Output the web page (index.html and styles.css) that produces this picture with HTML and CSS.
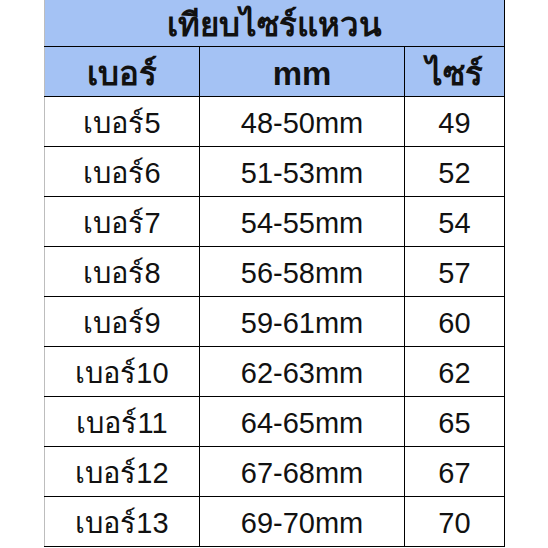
FILE: index.html
```html
<!DOCTYPE html>
<html lang="th">
<head>
<meta charset="utf-8">
<title>เทียบไซร์แหวน</title>
<link rel="stylesheet" href="styles.css">
</head>
<body>
<table class="sizes">
  <colgroup>
    <col class="c1"><col class="c2"><col class="c3">
  </colgroup>
  <thead>
    <tr class="title"><th colspan="3">เทียบไซร์แหวน</th></tr>
    <tr class="head"><th>เบอร์</th><th>mm</th><th>ไซร์</th></tr>
  </thead>
  <tbody>
    <tr><td>เบอร์5</td><td>48-50mm</td><td>49</td></tr>
    <tr><td>เบอร์6</td><td>51-53mm</td><td>52</td></tr>
    <tr><td>เบอร์7</td><td>54-55mm</td><td>54</td></tr>
    <tr><td>เบอร์8</td><td>56-58mm</td><td>57</td></tr>
    <tr><td>เบอร์9</td><td>59-61mm</td><td>60</td></tr>
    <tr><td>เบอร์10</td><td>62-63mm</td><td>62</td></tr>
    <tr><td>เบอร์11</td><td>64-65mm</td><td>65</td></tr>
    <tr><td>เบอร์12</td><td>67-68mm</td><td>67</td></tr>
    <tr><td>เบอร์13</td><td>69-70mm</td><td>70</td></tr>
  </tbody>
</table>
</body>
</html>
```
FILE: styles.css
```css
html, body {
  margin: 0;
  padding: 0;
  background: #ffffff;
}
body {
  font-family: "Liberation Sans", "Noto Sans", sans-serif;
  color: #111111;
}
.sizes {
  margin-left: 44px;
  width: 460px;
  table-layout: fixed;
  border-collapse: collapse;
  border-left: 1px solid #bdbdbd;
}
.c1 { width: 155px; }
.c2 { width: 205px; }
.c3 { width: 100px; }
.sizes th, .sizes td {
  padding: 3px 0 0 0;
  text-align: center;
  vertical-align: middle;
  border: 1px solid #000000;
  line-height: 1;
}
.sizes th:first-child, .sizes td:first-child {
  border-left: 1px solid #bdbdbd;
}
.title th {
  height: 44px;
  padding-top: 2px;
  background: #a4c2f4;
  border-top: none;
  border-left: none;
  font-size: 33px;
  font-weight: bold;
}
.head th {
  height: 46px;
  background: #a4c2f4;
  font-size: 33px;
  font-weight: bold;
}
.sizes td {
  height: 46px;
  font-size: 29px;
  font-weight: normal;
}
```
